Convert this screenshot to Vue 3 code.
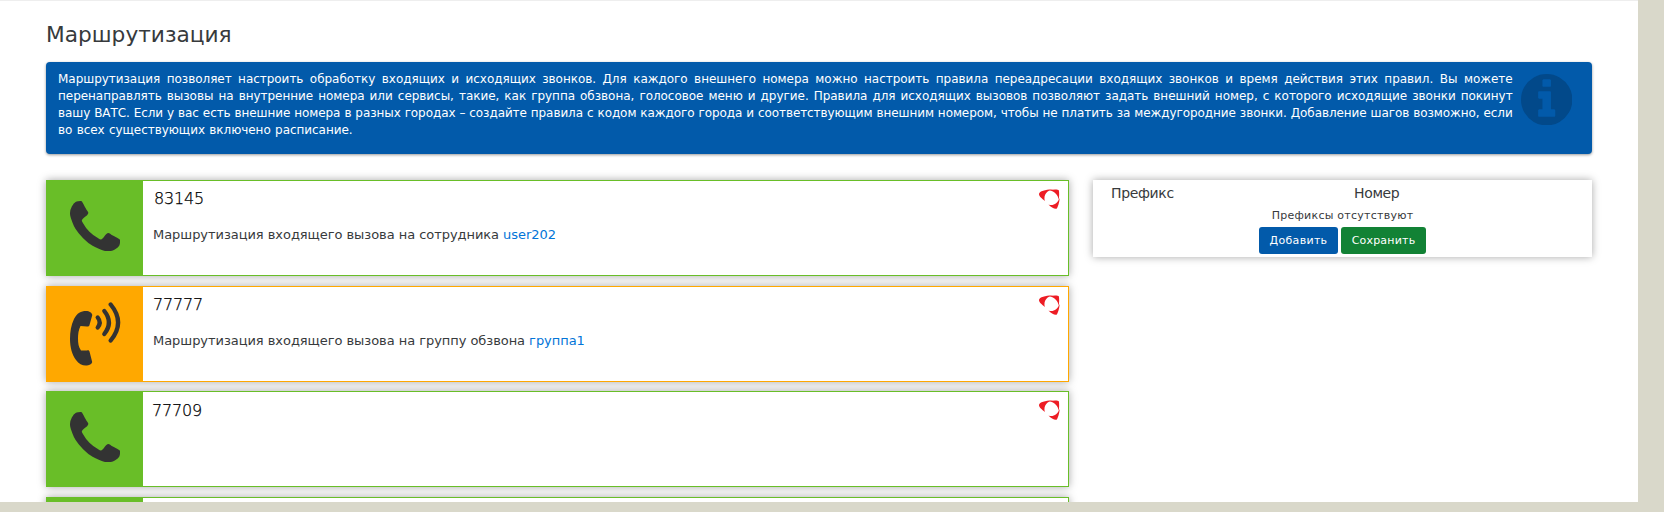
<script setup>
const routes = [
  { number: '83145', kind: 'phone', text: 'Маршрутизация входящего вызова на сотрудника', target: 'user202', indent: 'indent-1' },
  { number: '77777', kind: 'group', text: 'Маршрутизация входящего вызова на группу обзвона', target: 'группа1', indent: '' },
  { number: '77709', kind: 'phone', text: '', target: '', indent: 'indent-back' },
  { number: '', kind: 'phone', text: '', target: '', indent: '' },
]
</script>

<template>
  <div class="page">
    <main class="content">
      <h1>Маршрутизация</h1>
      <section class="info">
        <p>Маршрутизация позволяет настроить обработку входящих и исходящих звонков. Для каждого внешнего номера можно настроить правила переадресации входящих звонков и время действия этих правил. Вы можете перенаправлять вызовы на внутренние номера или сервисы, такие, как группа обзвона, голосовое меню и другие. Правила для исходящих вызовов позволяют задать внешний номер, с которого исходящие звонки покинут<br><span class="tight">вашу ВАТС. Если у вас есть внешние номера в разных городах – создайте правила с кодом каждого города и соответствующим внешним номером, чтобы не платить за междугородние звонки. Добавление шагов возможно, если</span> <br>во всех существующих включено расписание.</p>
        <svg class="info-icon" viewBox="128 128 1536 1536"><path d="M1152 1376v-160q0-14-9-23t-23-9h-96v-512q0-14-9-23t-23-9h-320q-14 0-23 9t-9 23v160q0 14 9 23t23 9h96v320h-96q-14 0-23 9t-9 23v160q0 14 9 23t23 9h448q14 0 23-9t9-23zm-128-896v-160q0-14-9-23t-23-9h-192q-14 0-23 9t-9 23v160q0 14 9 23t23 9h192q14 0 23-9t9-23zm640 416q0 209-103 385.5t-279.5 279.5-385.5 103-385.5-103-279.5-279.5-103-385.5 103-385.5 279.5-279.5 385.5-103 385.5 103 279.5 279.5 103 385.5z" /></svg>
      </section>
      <div class="columns">
        <div class="routes">
          <article v-for="(r, i) in routes" :key="i" class="card" :class="r.kind">
            <div class="badge">
              <svg v-if="r.kind === 'phone'" class="phone-icon" viewBox="192 128 1408 1408"><path d="M1600 1240q0 27-10 70.5t-21 68.5q-21 50-122 106-94 51-186 51-27 0-52.5-3.5t-57.5-12.5-47.5-14.5-55.5-20.5-49-18q-98-35-175-83-128-79-264.5-215.5t-215.5-264.5q-48-77-83-175-3-9-18-49t-20.5-55.5-14.5-47.5-12.5-57.5-3.5-52.5q0-92 51-186 56-101 106-122 25-11 68.5-21t70.5-10q14 0 21 3 18 6 53 76 11 19 30 54t35 63.5 31 53.5q3 4 17.5 25t21.5 35.5 7 28.5q0 20-28.5 50t-62 55-62 53-28.5 46q0 9 5 22.5t8.5 20.5 14 24 11.5 19q76 137 174 235t235 174q2 1 19 11.5t24 14 20.5 8.5 22.5 5q18 0 46-28.5t53-62 55-62 50-28.5q14 0 28.5 7t35.5 21.5 25 17.5q25 15 53.5 31t63.5 35 54 30q70 35 76 53 3 7 3 21z" /></svg>
              <svg v-else class="volume-icon" viewBox="0 0 51 64">
                <path d="M16 9C11 9 7 11 4 17C1 23 0 30 0 37C0 45 2 53 6 58C9 62 13 64 17 63.500C20 63 22 62 22.200 60L19.500 49.500C19 48 18 48 17 48.500L11 48.500C8.500 45 8 41 8 36.500C8 32 8.500 28 10.500 24L17 24.500C18.500 24.500 19.300 24.500 19.500 23L22.300 13C22 11 19.500 9 16 9Z" />
                <g class="waves">
                  <path d="M27.700 15.500Q31.700 20.500 27.700 25.500" />
                  <path d="M34.300 9Q43.500 20.500 34.300 32" />
                  <path d="M40.700 2.500Q55.500 20.500 40.700 38.500" />
                </g>
              </svg>
            </div>
            <div class="details">
              <h2 :class="r.indent">{{ r.number }}</h2>
              <p v-if="r.text">{{ r.text }} <a>{{ r.target }}</a></p>
            </div>
            <svg class="brand" viewBox="0 0 21 21">
              <path d="M0 5C.3 1.700 8 .2 14 .5C8 1.500 4.300 5.500 5.800 12C3 9.500 0 7.500 0 5Z" />
              <path d="M10 1.300C14 .3 19.300 .2 19.900 1.500C20.300 4 20.200 8 19.800 11C19 6 16 2.500 10 1.300Z" />
              <path d="M20.600 9C20.600 13 18.700 18.500 17.800 19.600C16 20.500 12 18.500 9.500 15.500C14 17.300 18.500 14.500 20.600 9Z" />
            </svg>
          </article>
        </div>
        <aside class="prefixes">
          <div class="head"><span>Префикс</span><span>Номер</span></div>
          <p>Префиксы отсутствуют</p>
          <div class="actions">
            <button class="add">Добавить</button>
            <button class="save">Сохранить</button>
          </div>
        </aside>
      </div>
    </main>
  </div>
</template>

<style>
body { background: #d9d8ca; overflow: hidden; }
</style>

<style scoped>
* { box-sizing: border-box; }
.page {
  width: 1638px; height: 502px; overflow: hidden; background: #fff;
  border-top: 1px solid #eee; color: #373a3c;
  font-family: "DejaVu Sans", sans-serif;
}
.content { padding: 20px 46px 0; }
h1 { margin: 0; height: 41px; font-size: 21.700px; font-weight: 400; line-height: 28px; }
.info {
  display: flex; height: 92px; padding: 8px 20px 0 12px; border-radius: 4px;
  background: #025aaa; color: #fff; box-shadow: 0 1px 3px rgba(0, 0, 0, .4);
}
.info p { width: 1455px; margin: 1px 0 0; font-size: 12px; line-height: 17px; letter-spacing: -.04px; text-align: justify; text-align-last: justify; }
.info p::after { content: ""; display: inline-block; width: 1160px; }
.tight { letter-spacing: -.08px; }
.info-icon { width: 51.400px; height: 51.400px; margin: 4px 0 0 8px; fill: #02498a; }
.columns { display: flex; align-items: flex-start; gap: 24px; margin-top: 26px; }
.routes { display: flex; flex-direction: column; gap: 9.600px; width: 1023px; }
.card { position: relative; display: flex; height: 96px; flex: none; border: 1px solid; background: #fff; box-shadow: 0 0 8px rgba(0, 0, 0, .35); }
.card.phone { border-color: #69be28; }
.card.group { border-color: #ffa800; }
.badge { display: flex; width: 96px; padding: 20px 0 0 23px; fill: #333; }
.phone .badge { background: #69be28; }
.group .badge { background: #ffa800; padding-top: 15px; }
.phone-icon { width: 50.300px; height: 50.300px; }
.volume-icon { width: 51px; height: 64px; }
.waves { fill: none; stroke: #333; stroke-width: 4.300; stroke-linecap: round; }
.details { padding: 8px 0 0 10px; }
h2 { margin: 0; height: 19px; color: #000; font-size: 16px; font-weight: 200; line-height: 19px; letter-spacing: -.2px; -webkit-text-stroke: .25px #000; }
.indent-1 { margin-left: 1px; }
.indent-back { margin: 1px 0 0 -1px; }
.details p { margin: 17px 0 0; font-size: 13px; line-height: 19px; letter-spacing: -.05px; }
a { color: #0275d8; }
.brand { position: absolute; top: 8px; right: 8px; width: 21px; height: 21px; fill: #ed1c24; }
.prefixes { width: 499px; height: 77px; background: #fff; box-shadow: 0 0 8px rgba(0, 0, 0, .35); text-align: center; }
.head { display: grid; grid-template-columns: 243px 1fr; height: 27px; padding-left: 18px; text-align: left; font-size: 14px; line-height: 27px; letter-spacing: -.35px; }
.prefixes p { margin: 0; height: 20px; font-size: 11px; line-height: 17px; letter-spacing: .25px; }
.actions { display: flex; justify-content: center; gap: 3px; }
button { height: 27px; padding: 0; border: 0; border-radius: 3px; color: #fff; font: 11px "DejaVu Sans", sans-serif; letter-spacing: .2px; }
.add { width: 79px; background: #025aaa; letter-spacing: .3px; }
.save { width: 85px; background: #128235; }
</style>
